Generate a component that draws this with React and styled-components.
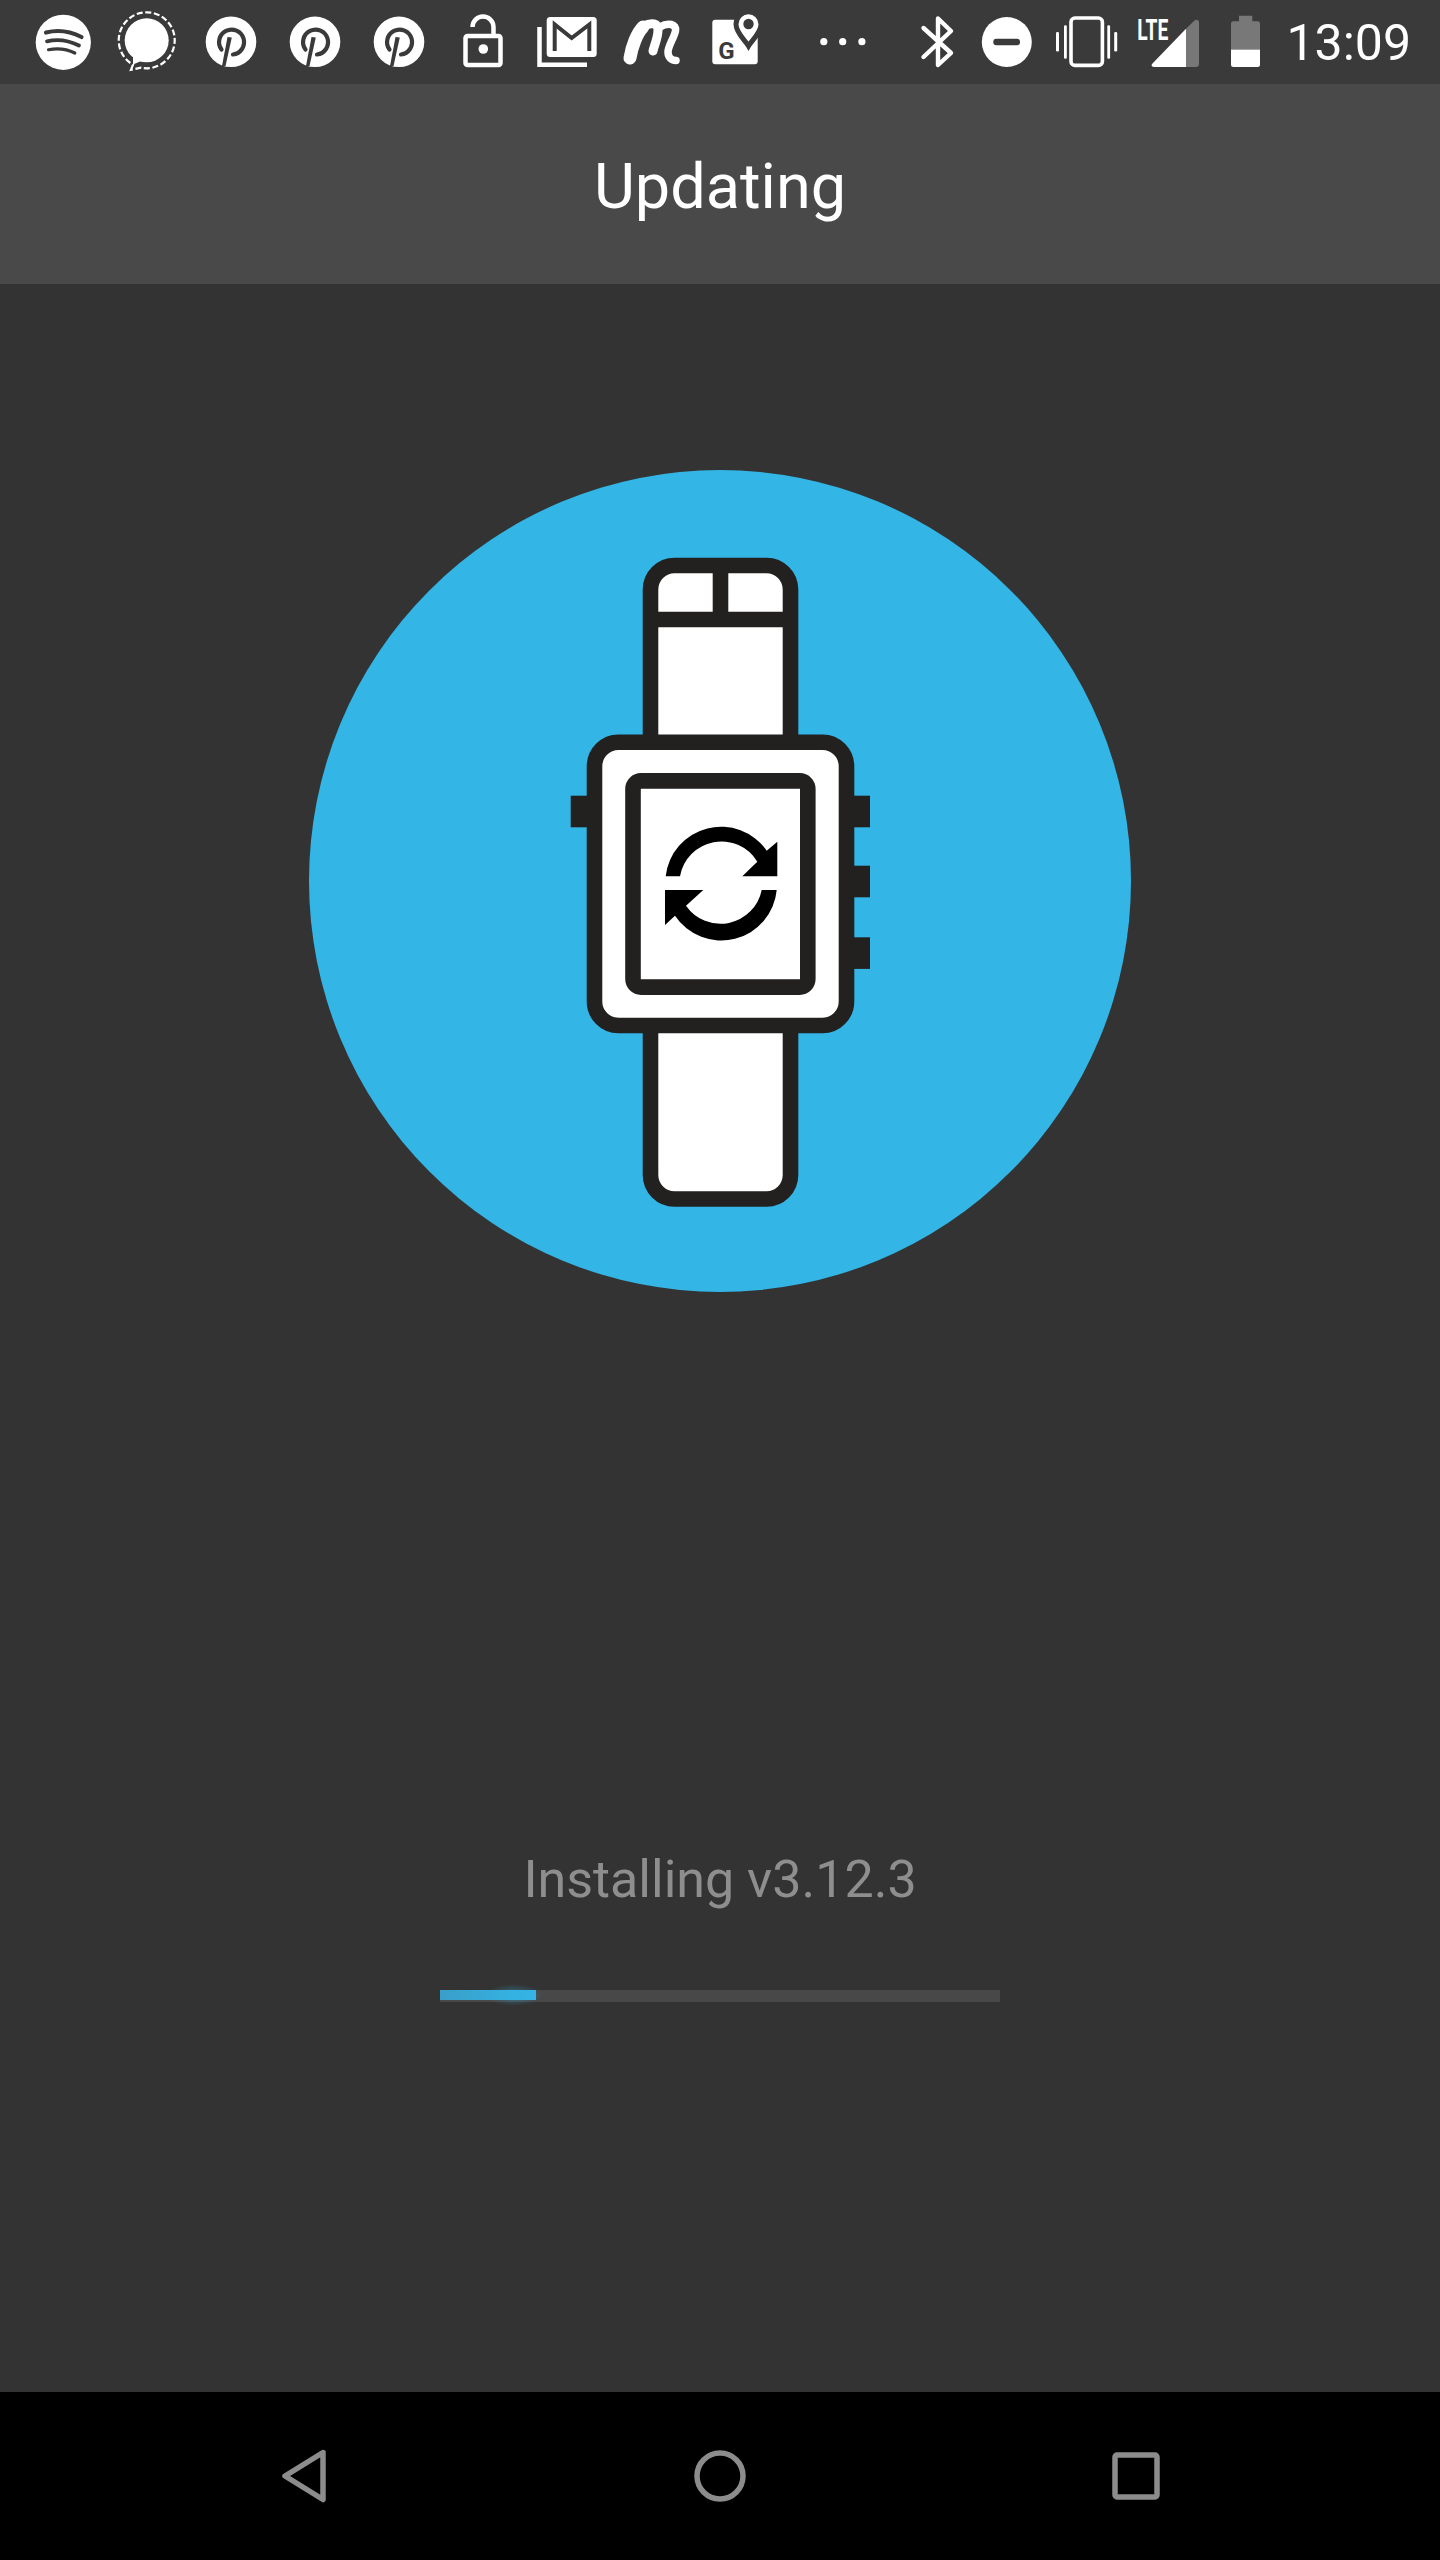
import React from "react";
import styled, { createGlobalStyle } from "styled-components";

const Global = createGlobalStyle`
  html, body { margin: 0; padding: 0; background: #333; }
  body { font-family: Roboto, "Liberation Sans", sans-serif; }
`;

const Page = styled.div`
  width: 1440px;
  height: 2560px;
  display: flex;
  flex-direction: column;
  overflow: hidden;
  background: #333333;
`;

const StatusBar = styled.header`
  height: 84px;
  flex: none;
  display: flex;
  padding: 0 29px 0 30px;
  background: #3a3a3a;
`;

const SlotSvg = styled.svg`
  display: block;
  flex: none;
  width: ${(p) => p.$w}px;
  height: 84px;
  fill: #fff;
`;

const Clock = styled.span`
  margin-left: auto;
  align-self: center;
  padding-top: 3px;
  font-size: 50px;
  line-height: 81px;
  color: #fff;
`;

const AppBar = styled.div`
  height: 200px;
  flex: none;
  display: flex;
  align-items: center;
  justify-content: center;
  background: #494949;
`;

const Title = styled.h1`
  margin: 6px 0 0;
  font-size: 63px;
  font-weight: 400;
  line-height: 72px;
  color: #fff;
`;

const Main = styled.main`
  flex: 1;
  display: flex;
  flex-direction: column;
  align-items: center;
  padding-top: 186px;
`;

const Disc = styled.div`
  width: 822px;
  height: 822px;
  border-radius: 50%;
  background: #33b5e6;
  display: flex;
  align-items: center;
  justify-content: center;
`;

const Status = styled.p`
  margin: 556px 0 0;
  font-size: 52px;
  font-weight: 400;
  line-height: 64px;
  color: #8e8e8e;
`;

const Track = styled.div`
  width: 560px;
  height: 12px;
  margin-top: 78px;
  background: #484848;
`;

const Fill = styled.div`
  position: relative;
  width: ${(p) => p.$pct}%;
  height: 10px;
  background: linear-gradient(90deg, #3a9fc9, #33b5e6);
  &::after {
    content: "";
    position: absolute;
    right: -6px;
    top: -6px;
    width: 56px;
    height: 22px;
    border-radius: 50%;
    background: radial-gradient(closest-side, rgba(51, 181, 230, 0.45), rgba(51, 181, 230, 0));
  }
`;

const NavBar = styled.nav`
  height: 168px;
  flex: none;
  display: flex;
  justify-content: space-between;
  align-items: center;
  padding: 0 278px 0;
  background: #000;
`;

const NavIcon = styled.svg`
  display: block;
  width: 52px;
  height: 56px;
  fill: none;
  stroke: #8c8c8c;
  stroke-width: 5.5;
  stroke-linejoin: round;
`;

function Slot({ x, w, children }) {
  return (
    <SlotSvg $w={w} viewBox={`${x} 0 ${w} 84`}>
      {children}
    </SlotSvg>
  );
}

const BG = "#3a3a3a";

function StatusIcons() {
  return (
    <>
      <Slot x={30} w={70}>
        <circle cx="63.3" cy="42.3" r="27.6" />
        <g fill="none" stroke={BG} strokeLinecap="round">
          <path d="M46 32.5Q64 28 81.5 37" strokeWidth="4.2" />
          <path d="M47 41.3Q63 37.5 79 45.5" strokeWidth="3.8" />
          <path d="M48.5 49.7Q63 47 74.8 53" strokeWidth="3.2" />
        </g>
      </Slot>
      <Slot x={100} w={100}>
        <circle cx="146.7" cy="40.3" r="22" />
        <path d="M133 52L133 64.5L146 59Z" />
        <path
          d="M131 69.7L133 64.7A28 28 0 1 1 141 67.7Z"
          fill="none"
          stroke="#fff"
          strokeWidth="2.2"
          strokeDasharray="6 2.6"
        />
      </Slot>
      {[231, 315, 399].map((cx) => (
        <Slot key={cx} x={cx - 31} w={cx === 399 ? 62 : 84}>
          <circle cx={cx} cy="41.8" r="25.3" />
          <path
            d={`M${cx - 9.5} 49.5A12.5 12.5 0 1 1 ${cx + 2} 54.5`}
            fill="none"
            stroke={BG}
            strokeWidth="4.2"
            strokeLinecap="round"
          />
          <path d={`M${cx - 3.5} 37L${cx + 0.8} 37.5L${cx - 5.5} 66H${cx - 9}Z`} fill={BG} />
        </Slot>
      ))}
      <Slot x={430} w={100}>
        <rect x="465.5" y="36" width="35" height="29" rx="2" fill="none" stroke="#fff" strokeWidth="4.5" />
        <circle cx="483.3" cy="49" r="4.8" />
        <path
          d="M472.5 27A10.5 10.5 0 0 1 493.5 27V35"
          fill="none"
          stroke="#fff"
          strokeWidth="4.5"
        />
      </Slot>
      <Slot x={530} w={75}>
        <rect x="546.7" y="17" width="50" height="40" rx="3.5" />
        <path
          d="M554.7 51V24.5L571.7 38L589.3 24.5V51"
          fill="none"
          stroke={BG}
          strokeWidth="4"
        />
        <path d="M539.5 27V64.7H587" fill="none" stroke="#fff" strokeWidth="4.5" />
      </Slot>
      <Slot x={605} w={95}>
        <g fill="none" stroke="#fff" strokeLinecap="round" strokeLinejoin="round">
          <path d="M630 58C632 46 637 33 643 27" strokeWidth="13" />
          <path d="M643 26C652 22 658 23 658 30C658 38 654 46 653 51" strokeWidth="9" />
          <path d="M660 27C668 22 677 24 675.5 31C674 38 668 46 668 52C668 58 672 60.5 676 60.5" strokeWidth="7.5" />
        </g>
      </Slot>
      <Slot x={700} w={100}>
        <rect x="712.3" y="19.7" width="45.4" height="44.5" rx="3" />
        <path
          d="M748.5 46C745 40 736 33 736 24.3A12.5 12.5 0 0 1 761 24.3C761 33 752 40 748.5 46Z"
          stroke={BG}
          strokeWidth="5"
        />
        <circle cx="748.5" cy="24" r="5.2" fill={BG} />
        <text x="726.5" y="58.5" fontFamily="Roboto" fontWeight="700" fontSize="24" textAnchor="middle" fill={BG}>
          G
        </text>
      </Slot>
      <Slot x={800} w={110}>
        <circle cx="823.8" cy="41.7" r="3.6" />
        <circle cx="842.7" cy="41.7" r="3.6" />
        <circle cx="861.9" cy="41.7" r="3.6" />
      </Slot>
      <Slot x={910} w={60}>
        <path
          d="M923.5 28L951 53L938 65V18.5L951 31L923.5 57"
          fill="none"
          stroke="#fff"
          strokeWidth="4.4"
          strokeLinecap="round"
          strokeLinejoin="round"
        />
      </Slot>
      <Slot x={970} w={75}>
        <circle cx="1006.8" cy="42" r="25" />
        <rect x="993.3" y="38.7" width="26.7" height="6.6" rx="3" fill={BG} />
      </Slot>
      <Slot x={1045} w={85}>
        <rect x="1071" y="18" width="31.4" height="47.4" rx="4" fill="none" stroke="#fff" strokeWidth="3.6" />
        <rect x="1064" y="25.3" width="2.8" height="33.4" rx="1.2" />
        <rect x="1107.3" y="25.3" width="2.8" height="33.4" rx="1.2" />
        <rect x="1056" y="32" width="3" height="19.5" rx="1.2" />
        <rect x="1114.2" y="32" width="3" height="19.5" rx="1.2" />
      </Slot>
      <Slot x={1130} w={90}>
        <text
          x="1137.3"
          y="39.7"
          fontFamily="Roboto"
          fontWeight="700"
          fontSize="30"
          textLength="31"
          lengthAdjust="spacingAndGlyphs"
        >
          LTE
        </text>
        <path d="M1186 28.7V67H1155C1152 67 1150.5 65.5 1152.5 63.5Z" />
        <path d="M1186 28.7L1194.5 20.5C1196.5 19 1199 20 1199 22.5V63.5C1199 66 1198 67 1195.5 67H1186Z" fill="#777" />
      </Slot>
      <Slot x={1220} w={50}>
        <path d="M1239 15.7H1252.3V21.3H1257.5A2.5 2.5 0 0 1 1260 23.8V48.7H1231V23.8A2.5 2.5 0 0 1 1233.5 21.3H1239Z" fill="#787878" />
        <rect x="1231" y="48.7" width="29" height="1" fill="#a5a5a5" />
        <path d="M1231 49.7H1260V64.5A2.5 2.5 0 0 1 1257.5 67H1233.5A2.5 2.5 0 0 1 1231 64.5Z" />
      </Slot>
    </>
  );
}

const INK = "#222120";

function WatchArt() {
  return (
    <svg width="320" height="660" viewBox="560 551 320 660">
      <g fill={INK}>
        <rect x="570.7" y="795.7" width="30" height="31.6" />
        <rect x="840" y="795.7" width="30" height="31.6" />
        <rect x="840" y="865.7" width="30" height="31.6" />
        <rect x="840" y="937.3" width="30" height="31.6" />
      </g>
      <g fill="#fff" stroke={INK} strokeWidth="15.6">
        <rect x="650.5" y="565.5" width="140" height="633.5" rx="24" />
        <path d="M650 619.5H791M720.5 565V619" fill="none" />
        <rect x="594.5" y="742.2" width="252" height="283.3" rx="24" />
        <rect x="633" y="780.9" width="174.8" height="206.2" rx="8" />
      </g>
      <path d="M665.7 876.3A55.6 55.6 0 0 1 766.7 850.7L777.3 841.7V876.3H742.3L757.3 861.7A42 42 0 0 0 680 876.3Z" fill="#000" />
      <path d="M665 890H703.3L686 905.7A42 42 0 0 0 761.7 890H776.7A55.6 55.6 0 0 1 675 915.7L665 925Z" fill="#000" />
    </svg>
  );
}

export default function App() {
  return (
    <Page>
      <Global />
      <StatusBar>
        <StatusIcons />
        <Clock>13:09</Clock>
      </StatusBar>
      <AppBar>
        <Title>Updating</Title>
      </AppBar>
      <Main>
        <Disc>
          <WatchArt />
        </Disc>
        <Status>Installing v3.12.3</Status>
        <Track>
          <Fill $pct={17.14} />
        </Track>
      </Main>
      <NavBar>
        <NavIcon viewBox="0 0 52 56">
          <path d="M45 4.5L7 28L45 51.5Z" />
        </NavIcon>
        <NavIcon viewBox="0 0 52 56">
          <circle cx="26" cy="28" r="23" />
        </NavIcon>
        <NavIcon viewBox="0 0 52 56">
          <rect x="5" y="7" width="42" height="42" rx="2" />
        </NavIcon>
      </NavBar>
    </Page>
  );
}
